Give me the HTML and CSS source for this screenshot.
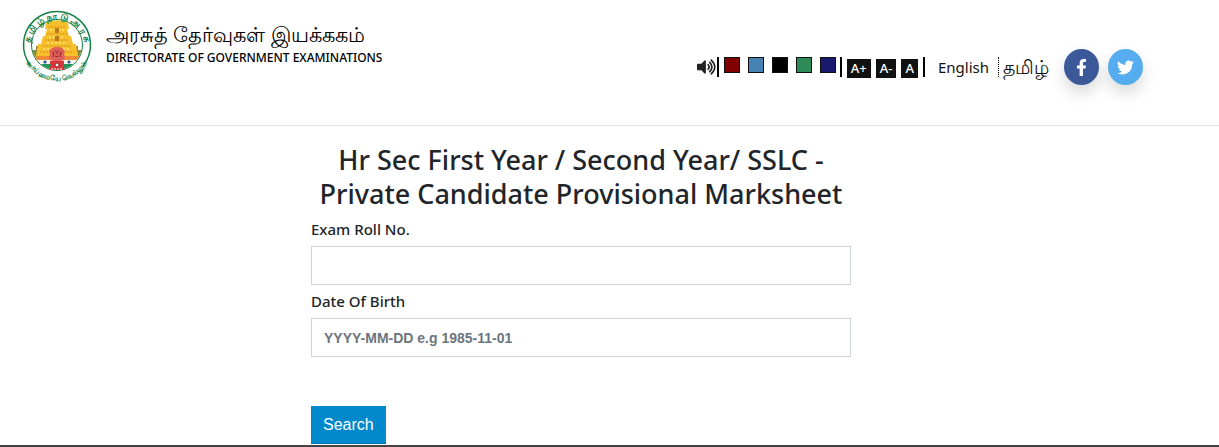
FILE: index.html
```
<!DOCTYPE html>
<html lang="en">
<head>
<meta charset="utf-8">
<meta name="viewport" content="width=device-width, initial-scale=1">
<title>Directorate of Government Examinations</title>
<link rel="stylesheet" href="styles.css">
</head>
<body>
<header class="header">
  <a class="brand" href="#">
    <svg class="emblem" viewBox="1 1 72 72" role="img" aria-label="Tamil Nadu emblem">
      <defs>
        <path id="arc-top" d="M12.500 51A27.500 27.500 0 1 1 59.500 51"/>
        <path id="arc-bottom" d="M4 49A34.500 34.500 0 0 0 68 49"/>
        <clipPath id="disc"><circle cx="36" cy="35" r="25"/></clipPath>
      </defs>
      <path d="M10 56A33.500 33.500 0 1 1 62 56" fill="#fff" stroke="#168044" stroke-width="1.500"/>
      <circle cx="36" cy="35" r="25.500" fill="#fff" stroke="#168044" stroke-width="1"/>
      <g clip-path="url(#disc)">
        <path d="M10 46h52v4H10z" fill="#f08a34"/>
        <path d="M10 50h52v4H10z" fill="#f4f6ee"/>
        <path d="M10 54h52v6H10z" fill="#21945a"/>
        <path d="M10 46v-6h5v-4h6v10zM62 46v-6h-5v-4h-6v10z" fill="#8c8a3a"/>
        <path d="M25 13q2-3 4-1q2-3 5-1q2-2 4 0q3-2 5 1q2-2 4 1l1 6h-2l2 7h2l2 8h3l2 12H15l2-12h3l2-8h2l2-7h-2z" fill="#f5c02c"/>
        <path d="M27 17h18M26 24h20M24 30h24M22 36h28M19 42h34" stroke="#d88d1b" stroke-width="1.200" stroke-dasharray="2 1"/>
        <path d="M29 20h14M28 27h16M26 33h20M22 39h28" stroke="#ffe57b" stroke-width="1.500" stroke-dasharray="2 2"/>
        <path d="M34 18h4v5h-4zM34 26h4v5h-4z" fill="#b97817"/>
      </g>
      <path d="M29 50l-1-3 1-3-1-3 3-3 3-1h4l3 1 3 3-1 3 1 3-1 3-3 1h-8z" fill="#e2605a"/>
      <path d="M31 42l2 1-1 4M41 42l-2 1 1 4M34 41h1M37 41h1M34 46q2 2 4 0M36 41v3" fill="none" stroke="#8e2529" stroke-width="1"/>
      <path d="M29 51h14v3l-1 1 2 5H28l2-5-1-1z" fill="#d8363b"/>
      <circle cx="36" cy="55" r="2" fill="#fff" stroke="#8e2529"/>
      <path d="M30 59h12" stroke="#fff" stroke-width="1" stroke-dasharray="2 1"/>
      <circle cx="24" cy="52" r="1.600" fill="#29519d"/><circle cx="48" cy="52" r="1.600" fill="#29519d"/>
      <text class="emblem-top"><textPath href="#arc-top" startOffset="50%" text-anchor="middle">த மி ழ் நா டு அ ர சு</textPath></text>
      <text class="emblem-bottom"><textPath href="#arc-bottom" startOffset="50%" text-anchor="middle">வாய்மையே வெல்லும்</textPath></text>
    </svg>
    <span class="brand-text">
      <span class="brand-tamil" lang="ta">அரசுத் தேர்வுகள் இயக்ககம்</span>
      <span class="brand-english">DIRECTORATE OF GOVERNMENT EXAMINATIONS</span>
    </span>
  </a>
  <div class="tools">
    <button class="speaker" type="button" aria-label="Screen reader">
      <svg viewBox="0 0 576 512"><path fill="#222" d="M215 71l-89 89H24a24 24 0 0 0-24 24v144a24 24 0 0 0 24 24h102l89 89c15 15 41 4 41-17V88c0-21-26-32-41-17z"/><path fill="none" stroke="#222" stroke-width="46" stroke-linecap="round" d="M320 190q64 66 0 132M366 122q130 134 0 268M410 56q206 200 0 400"/></svg>
    </button>
    <div class="swatches">
      <button class="swatch maroon" type="button" aria-label="Maroon theme"></button>
      <button class="swatch blue" type="button" aria-label="Blue theme"></button>
      <button class="swatch black" type="button" aria-label="Black theme"></button>
      <button class="swatch green" type="button" aria-label="Green theme"></button>
      <button class="swatch navy" type="button" aria-label="Navy theme"></button>
    </div>
    <div class="sizes">
      <button class="size" type="button">A+</button>
      <button class="size" type="button">A-</button>
      <button class="size" type="button">A</button>
    </div>
    <nav class="languages">
      <a class="language" href="#">English</a>
      <a class="language tamil" href="#" lang="ta">தமிழ்</a>
    </nav>
    <div class="socials">
      <a class="social facebook" href="#" aria-label="Facebook"><svg viewBox="0 0 320 512"><path fill="#fff" d="M279 288l14-93h-89v-60c0-25 12-50 52-50h41V7s-37-7-72-7c-73 0-121 44-121 125v70H23v93h81v224h100V288z"/></svg></a>
      <a class="social twitter" href="#" aria-label="Twitter"><svg viewBox="0 0 512 512"><path fill="#fff" d="M459 152c0 4 0 9 0 14 0 138-105 298-298 298-59 0-114-17-161-47 8 1 16 1 25 1 49 0 94-16 130-45-46-1-85-31-98-73 6 1 13 2 20 2 9 0 19-1 28-4-48-10-84-52-84-103v-1c14 8 30 13 47 13-28-19-47-51-47-87 0-19 5-37 14-53 52 64 129 105 216 110-2-8-3-16-3-24 0-58 47-105 105-105 30 0 58 13 77 33 24-5 46-13 66-25-8 24-24 45-46 58 21-2 42-8 60-16-14 21-31 39-51 54z"/></svg></a>
    </div>
  </div>
</header>
<main class="main">
  <form class="form">
    <h1 class="title">Hr Sec First Year / Second Year/ SSLC - Private Candidate Provisional Marksheet</h1>
    <label class="label" for="roll">Exam Roll No.</label>
    <input class="field" id="roll" type="text">
    <label class="label" for="dob">Date Of Birth</label>
    <input class="field" id="dob" type="text" placeholder="YYYY-MM-DD e.g 1985-11-01">
    <button class="search" type="button">Search</button>
  </form>
</main>
<footer class="footer"></footer>
</body>
</html>
```
FILE: styles.css
```
* { box-sizing: border-box; }
body {
  margin: 0;
  background: #fff;
  color: #212529;
  font-family: "Noto Sans", "Open Sans", sans-serif;
  font-size: 15px;
}
a { color: inherit; text-decoration: none; }
button { border: 0; padding: 0; font: inherit; cursor: pointer; }
.header {
  display: flex;
  justify-content: space-between;
  align-items: flex-start;
  padding: 11px 76px 40px 22px;
  border-bottom: 1px solid #dee2e6;
}
.brand { display: flex; gap: 12px; color: #000; }
.emblem { width: 72px; height: 72px; overflow: visible; }
.emblem-top { font-size: 9px; font-weight: 700; fill: #168044; }
.emblem-bottom { font-size: 7px; font-weight: 700; fill: #168044; }
.brand-text { display: flex; flex-direction: column; padding-top: 9px; }
.brand-tamil { font-size: 21px; line-height: 28px; font-weight: 500; white-space: nowrap; }
.brand-english {
  font-size: 12px;
  line-height: 20px;
  font-weight: 500;
  white-space: nowrap;
}
.tools { display: flex; align-items: center; padding-top: 38px; }
.speaker { width: 20px; height: 20px; background: none; }
.speaker svg { display: block; width: 20px; height: 18px; }
.swatches {
  display: flex;
  gap: 8px;
  height: 20px;
  padding: 0 4px 0 5px;
  border: solid #000;
  border-width: 0 2px;
}
.swatch { width: 16px; height: 16px; border: 1px solid #111; }
.maroon { background: #800000; }
.blue { background: #4682b4; }
.black { background: #000; }
.green { background: #2e8b57; }
.navy { background: #191970; }
.sizes {
  display: flex;
  gap: 5px;
  height: 20px;
  padding: 2px 5px 0;
  border-right: 2px solid #000;
}
.size {
  height: 19px;
  padding: 0 4px;
  background: #111;
  color: #fff;
  font-size: 13px;
  line-height: 19px;
  font-weight: 500;
}
.languages { display: flex; align-items: center; padding: 0 15px 0 13px; color: #111; }
.language { line-height: 20px; padding-right: 9px; white-space: nowrap; }
.language.tamil { padding: 0 0 0 4px; border-left: 1px dotted #000; font-size: 19px; }
.socials { display: flex; gap: 9px; }
.social {
  display: flex;
  align-items: center;
  justify-content: center;
  width: 35px;
  height: 36px;
  border-radius: 50%;
  box-shadow: 0 8px 16px rgba(0, 0, 0, 0.15);
}
.social svg { width: 17px; height: 17px; }
.facebook { background: #3b5998; }
.twitter { background: #55acee; }
.main { display: grid; grid-template-columns: 311fr 540fr 368fr; padding-top: 17px; }
.form { grid-column: 2; display: flex; flex-direction: column; align-items: flex-start; }
.title {
  align-self: stretch;
  margin: 0 0 6px;
  font-size: 27px;
  line-height: 34px;
  font-weight: 500;
  text-align: center;
}
.label { line-height: 24px; margin-bottom: 5px; font-size: 15px; font-weight: 500; }
.field {
  width: 100%;
  height: 39px;
  margin-bottom: 4px;
  padding: 6px 12px;
  border: 1px solid #ced4da;
  background: #fff;
  color: #495057;
  font-family: "Liberation Sans", Arial, sans-serif;
  font-size: 14px;
  font-weight: 700;
}
.field::placeholder { color: #6c757d; opacity: 1; }
.search {
  margin-top: 45px;
  height: 38px;
  padding: 0 12px;
  border-bottom: 1px solid #0074b0;
  background: #0088cc;
  color: #fff;
  font-family: "Liberation Sans", Arial, sans-serif;
  font-size: 16px;
}
.footer { margin-top: 1px; height: 2px; background: #444; }
```
